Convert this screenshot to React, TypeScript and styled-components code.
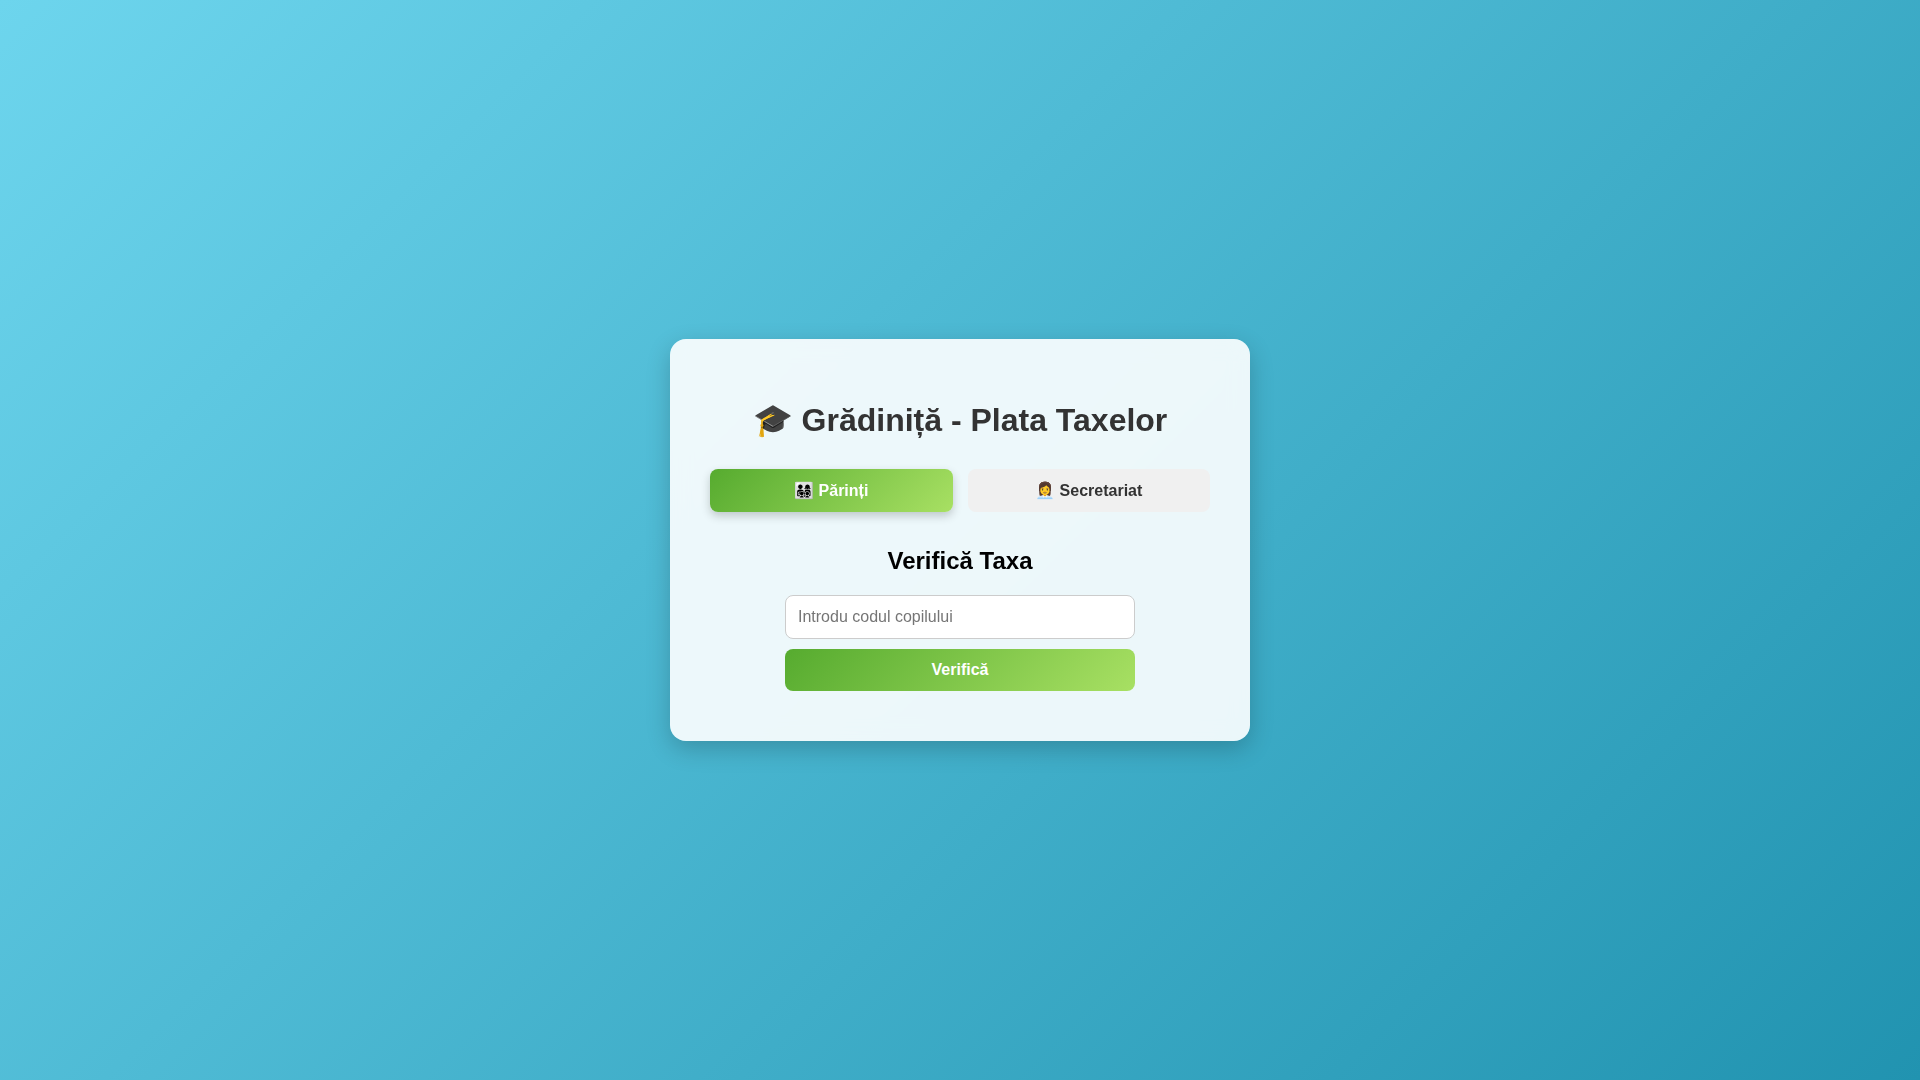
import React, { useState } from "react";
import styled, { createGlobalStyle } from "styled-components";

const GlobalStyle = createGlobalStyle`
  body {
    margin: 0;
    font-family: "Liberation Sans", Arial, sans-serif;
  }
`;

const Page = styled.main`
  display: flex;
  align-items: center;
  justify-content: center;
  min-height: 100vh;
  background: linear-gradient(135deg, #6dd5ed, #2193b0);
`;

const Card = styled.section`
  box-sizing: border-box;
  width: 580px;
  max-width: 100%;
  padding: 40px;
  border-radius: 16px;
  background: rgba(255, 255, 255, 0.9);
  backdrop-filter: blur(10px);
  box-shadow: 0 8px 24px rgba(0, 0, 0, 0.2);
  text-align: center;
`;

const Title = styled.h1`
  margin: 22px 0 30px;
  color: #333;
  font-size: 32px;
`;

const Tabs = styled.div`
  display: flex;
  gap: 15px;
  margin-bottom: 35px;
`;

const Button = styled.button<{ $active?: boolean }>`
  flex: 1;
  padding: 12px;
  border: none;
  border-radius: 8px;
  background: ${(p) => (p.$active ? "linear-gradient(135deg, #56ab2f, #a8e063)" : "#f0f0f0")};
  color: ${(p) => (p.$active ? "#fff" : "#333")};
  font-family: inherit;
  font-size: 16px;
  font-weight: bold;
  cursor: pointer;
`;

const Tab = styled(Button)`
  box-shadow: ${(p) => (p.$active ? "0 4px 10px rgba(0, 0, 0, 0.2)" : "none")};
`;

const Subtitle = styled.h2`
  margin: 0 0 20px;
  color: #000;
  font-size: 24px;
`;

const Form = styled.form`
  display: flex;
  flex-direction: column;
  gap: 10px;
  width: 350px;
  max-width: 100%;
  margin: 0 auto 10px;
`;

const Field = styled.input`
  padding: 12px;
  border: 1px solid #ccc;
  border-radius: 8px;
  background: #fff;
  font-family: inherit;
  font-size: 16px;
`;

export default function App() {
  const [tab, setTab] = useState("parents");
  return (
    <>
      <GlobalStyle />
      <Page>
        <Card>
          <Title>🎓 Grădiniță - Plata Taxelor</Title>
          <Tabs>
            <Tab type="button" $active={tab === "parents"} onClick={() => setTab("parents")}>
              👨‍👩‍👧‍👦 Părinți
            </Tab>
            <Tab type="button" $active={tab === "office"} onClick={() => setTab("office")}>
              👩‍💼 Secretariat
            </Tab>
          </Tabs>
          <Subtitle>Verifică Taxa</Subtitle>
          <Form onSubmit={(e) => e.preventDefault()}>
            <Field type="text" aria-label="Codul copilului" placeholder="Introdu codul copilului" />
            <Button type="submit" $active>
              Verifică
            </Button>
          </Form>
        </Card>
      </Page>
    </>
  );
}
